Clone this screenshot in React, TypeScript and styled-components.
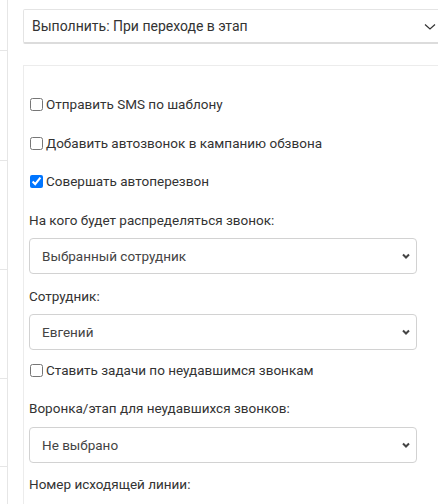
import React from 'react';
import styled, { createGlobalStyle } from 'styled-components';

const GlobalStyle = createGlobalStyle`
  html, body {
    margin: 0;
    padding: 0;
    background: #fff;
    overflow: hidden;
  }
  body {
    font-family: Roboto, 'Noto Sans', sans-serif;
    font-size: 14px;
    color: #333;
  }
`;

const Page = styled.div`
  display: flex;
  width: 438px;
  height: 504px;
  overflow: hidden;
`;

const Sidebar = styled.div`
  flex: 0 0 7px;
  display: flex;
  flex-direction: column;
  border-right: 1px solid #e6e6e6;
`;

const SideCell = styled.div<{ $h: number }>`
  height: ${({ $h }) => $h}px;
  flex: 0 0 auto;
  border-bottom: 1px solid #e6e6e6;
`;

const Main = styled.div`
  flex: 1;
  min-width: 0;
  padding: 9px 0 0 15px;
`;

const TopSelect = styled.div`
  display: flex;
  align-items: center;
  justify-content: space-between;
  height: 35px;
  width: 420px;
  padding: 0 0 0 8px;
  box-sizing: border-box;
  border: 1px solid #e4e4e4;
  border-bottom: 2px solid #dcdcdc;
  border-radius: 2px;
  color: #333;
  font-size: 14px;
`;

const TopChevron = styled.svg`
  margin-right: 6px;
  margin-top: 1px;
`;

const Panel = styled.div`
  margin-top: 21px;
  width: 430px;
  height: 460px;
  border: 1px solid #ececec;
  border-right: none;
  padding: 28px 0 0 5px;
  box-sizing: border-box;
  font-size: 13.5px;
`;

const CheckRow = styled.label<{ $mt?: number }>`
  display: flex;
  align-items: center;
  height: 20px;
  margin-top: ${({ $mt }) => $mt ?? 0}px;
  cursor: pointer;
`;

const Box = styled.input`
  width: 13px;
  height: 13px;
  margin: 0 3px 0 1px;
`;

const Label = styled.div<{ $mt?: number }>`
  height: 20px;
  line-height: 20px;
  margin-top: ${({ $mt }) => $mt ?? 0}px;
`;

const Select = styled.div<{ $mt?: number }>`
  display: flex;
  align-items: center;
  justify-content: space-between;
  width: 388px;
  height: 36px;
  margin-top: ${({ $mt }) => $mt ?? 0}px;
  padding: 0 5px 0 12px;
  box-sizing: border-box;
  border: 1px solid #d2d2d2;
  border-radius: 4px;
  color: #444;
`;

function Chevron() {
  return (
    <svg width="10" height="8" viewBox="0 0 10 8">
      <path d="M2 2.5 L5 5.5 L8 2.5" fill="none" stroke="#444" strokeWidth="2" />
    </svg>
  );
}

export default function App() {
  return (
    <>
      <GlobalStyle />
      <Page>
        <Sidebar>
          <SideCell $h={50} />
          <SideCell $h={109} />
          <SideCell $h={108} />
          <SideCell $h={108} />
          <SideCell $h={87} />
        </Sidebar>
        <Main>
          <TopSelect>
            <span>Выполнить: При переходе в этап</span>
            <TopChevron width="12" height="8" viewBox="0 0 12 8">
              <path d="M1 1.5 L6 6 L11 1.5" fill="none" stroke="#333" strokeWidth="1.2" />
            </TopChevron>
          </TopSelect>
          <Panel>
            <CheckRow>
              <Box type="checkbox" />
              Отправить SMS по шаблону
            </CheckRow>
            <CheckRow $mt={19}>
              <Box type="checkbox" />
              Добавить автозвонок в кампанию обзвона
            </CheckRow>
            <CheckRow $mt={18}>
              <Box type="checkbox" defaultChecked />
              Совершать автоперезвон
            </CheckRow>
            <Label $mt={19}>На кого будет распределяться звонок:</Label>
            <Select $mt={8}>
              <span>Выбранный сотрудник</span>
              <Chevron />
            </Select>
            <Label $mt={12}>Сотрудник:</Label>
            <Select $mt={8}>
              <span>Евгений</span>
              <Chevron />
            </Select>
            <CheckRow $mt={10}>
              <Box type="checkbox" />
              Ставить задачи по неудавшимся звонкам
            </CheckRow>
            <Label $mt={18}>Воронка/этап для неудавшихся звонков:</Label>
            <Select $mt={9}>
              <span>Не выбрано</span>
              <Chevron />
            </Select>
            <Label $mt={11}>Номер исходящей линии:</Label>
          </Panel>
        </Main>
      </Page>
    </>
  );
}
